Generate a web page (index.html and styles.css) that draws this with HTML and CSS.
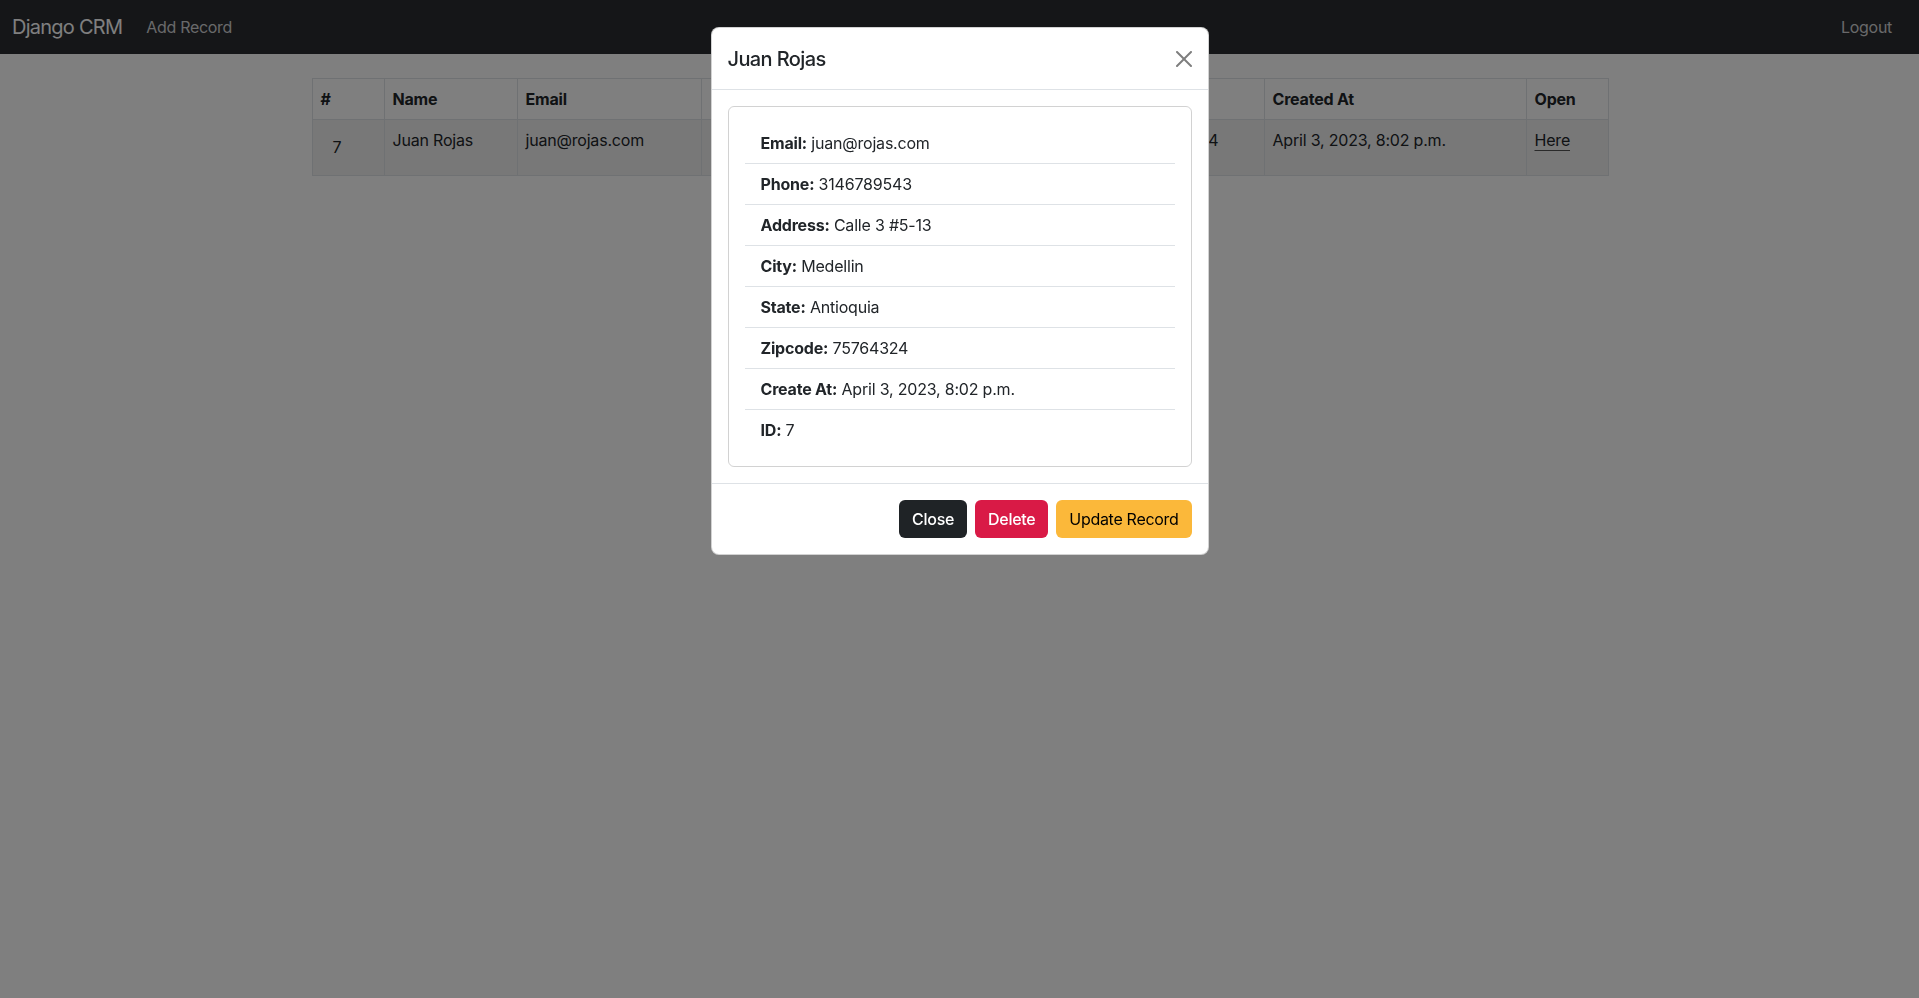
FILE: index.html
```html
<!DOCTYPE html>
<html lang="en">
<head>
<meta charset="utf-8">
<title>Django CRM</title>
<link rel="stylesheet" href="styles.css">
</head>
<body>
<nav class="navbar">
  <a class="brand" href="#">Django CRM</a>
  <ul class="nav-list">
    <li><a class="nav-link" href="#">Add Record</a></li>
  </ul>
  <ul class="nav-list nav-right">
    <li><a class="nav-link" href="#">Logout</a></li>
  </ul>
</nav>

<main class="container">
  <table class="table">
    <colgroup>
      <col class="c-num"><col class="c-name"><col class="c-email"><col class="c-phone"><col class="c-address">
      <col class="c-city"><col class="c-state"><col class="c-zip"><col class="c-created"><col class="c-open">
    </colgroup>
    <thead>
      <tr>
        <th>#</th><th>Name</th><th>Email</th><th class="hidden-col">Phone</th><th>Address</th>
        <th>City</th><th>State</th><th>Zipcode</th><th>Created At</th><th>Open</th>
      </tr>
    </thead>
    <tbody>
      <tr>
        <td><button class="row-btn" type="button">7</button></td>
        <td>Juan Rojas</td>
        <td>juan@rojas.com</td>
        <td class="hidden-col">3146789543</td>
        <td>Calle 3 #5-13</td>
        <td>Medellin</td>
        <td>Antioquia</td>
        <td>75764324</td>
        <td>April 3, 2023, 8:02 p.m.</td>
        <td><a class="here" href="#">Here</a></td>
      </tr>
    </tbody>
  </table>
</main>

<div class="backdrop"></div>

<div class="modal">
  <div class="modal-content">
    <div class="modal-header">
      <h5 class="modal-title">Juan Rojas</h5>
      <button class="btn-close" type="button" aria-label="Close">
        <svg viewBox="0 0 16 16" width="16" height="16"><path d="M.293.293a1 1 0 0 1 1.414 0L8 6.586 14.293.293a1 1 0 1 1 1.414 1.414L9.414 8l6.293 6.293a1 1 0 0 1-1.414 1.414L8 9.414l-6.293 6.293a1 1 0 0 1-1.414-1.414L6.586 8 .293 1.707a1 1 0 0 1 0-1.414z"/></svg>
      </button>
    </div>
    <div class="modal-body">
      <div class="card">
        <ul class="list-group">
          <li class="list-item"><strong>Email:</strong> juan@rojas.com</li>
          <li class="list-item"><strong>Phone:</strong> 3146789543</li>
          <li class="list-item"><strong>Address:</strong> Calle 3 #5-13</li>
          <li class="list-item"><strong>City:</strong> Medellin</li>
          <li class="list-item"><strong>State:</strong> Antioquia</li>
          <li class="list-item"><strong>Zipcode:</strong> 75764324</li>
          <li class="list-item"><strong>Create At:</strong> April 3, 2023, 8:02 p.m.</li>
          <li class="list-item"><strong>ID:</strong> 7</li>
        </ul>
      </div>
    </div>
    <div class="modal-footer">
      <button class="btn btn-dark" type="button">Close</button>
      <button class="btn btn-danger" type="button">Delete</button>
      <button class="btn btn-warning" type="button">Update Record</button>
    </div>
  </div>
</div>
</body>
</html>
```

FILE: styles.css
```css
* { box-sizing: border-box; }

html, body {
  margin: 0;
  padding: 0;
}

body {
  font-family: Inter, "Liberation Sans", sans-serif;
  font-size: 16px;
  line-height: 24px;
  color: #212529;
  background: #ffffff;
}

/* Navbar */
.navbar {
  display: flex;
  align-items: center;
  height: 54px;
  padding: 0 19px 0 12px;
  background: #2a2c30;
}

.brand {
  font-size: 20px;
  line-height: 30px;
  color: #ffffff;
  text-decoration: none;
  margin-right: 16px;
  letter-spacing: -0.75px;
}

.nav-list {
  display: flex;
  list-style: none;
  margin: 0;
  padding: 0;
}

.nav-right {
  margin-left: auto;
}

.nav-link {
  display: block;
  padding: 8px;
  color: #d2d3d5;
  text-decoration: none;
  letter-spacing: -0.3px;
}

/* Table */
.container {
  max-width: 1320px;
  margin: 24px auto 0;
  padding: 0 12px;
}

.table {
  width: 100%;
  border-collapse: collapse;
  table-layout: fixed;
  letter-spacing: -0.2px;
}

.c-num { width: 72px; }
.c-name { width: 133px; }
.c-email { width: 184px; }
.c-phone { width: 115px; }
.c-address { width: 125px; }
.c-city { width: 90px; }
.c-state { width: 103px; }
.c-zip { width: 130px; }
.c-created { width: 262px; }
.c-open { width: 82px; }

.table th,
.table td {
  border: 1px solid #dee2e6;
  padding: 8px;
  text-align: left;
  vertical-align: top;
  white-space: nowrap;
  overflow: hidden;
}

.table .hidden-col {
  padding-left: 14px;
}

.table th {
  font-weight: 700;
}

.table tbody td {
  height: 56px;
  background: #f1f1f1;
}

.row-btn {
  display: block;
  font: inherit;
  color: #212529;
  background: transparent;
  border: 1px solid transparent;
  padding: 6px 11px;
  line-height: 24px;
}

.here {
  color: #212529;
  text-decoration: underline;
  text-underline-offset: 4px;
  text-decoration-color: #555;
}

/* Backdrop + modal */
.backdrop {
  position: fixed;
  inset: 0;
  background: rgba(0, 0, 0, 0.5);
}

.modal {
  position: fixed;
  inset: 0;
  display: flex;
  justify-content: center;
  align-items: flex-start;
  padding-top: 27px;
}

.modal-content {
  width: 498px;
  background: #ffffff;
  border: 1px solid rgba(0, 0, 0, 0.175);
  border-radius: 8px;
  letter-spacing: -0.2px;
}

.modal-header {
  display: flex;
  align-items: center;
  justify-content: space-between;
  height: 62px;
  padding: 0 16px;
  border-bottom: 1px solid #dee2e6;
}

.modal-title {
  margin: 0;
  font-size: 20px;
  font-weight: 500;
  line-height: 30px;
  letter-spacing: -0.6px;
}

.btn-close {
  display: flex;
  align-items: center;
  justify-content: center;
  width: 16px;
  height: 16px;
  padding: 0;
  border: 0;
  background: transparent;
  opacity: 0.5;
}

.btn-close svg {
  fill: #000000;
  display: block;
}

.modal-body {
  padding: 16px;
}

.card {
  border: 1px solid rgba(0, 0, 0, 0.175);
  border-radius: 6px;
  padding: 16px;
}

.list-group {
  list-style: none;
  margin: 0;
  padding: 0;
}

.list-item {
  padding: 8px 16px;
  border-bottom: 1px solid #dee2e6;
}

.list-item:last-child {
  border-bottom: 0;
}

.list-item strong {
  font-weight: 700;
}

.modal-footer {
  display: flex;
  justify-content: flex-end;
  align-items: center;
  padding: 12px;
  border-top: 1px solid #dee2e6;
}

.btn {
  margin: 4px;
  font: inherit;
  font-size: 16px;
  line-height: 24px;
  padding: 6px 12px;
  border: 1px solid transparent;
  border-radius: 6px;
  letter-spacing: -0.3px;
}

.btn-dark {
  background: #1f2326;
  color: #ffffff;
  font-weight: 500;
}

.btn-danger {
  background: #d91a46;
  color: #ffffff;
  font-weight: 500;
}

.btn-warning {
  background: #fbb83a;
  color: #000000;
}
```
